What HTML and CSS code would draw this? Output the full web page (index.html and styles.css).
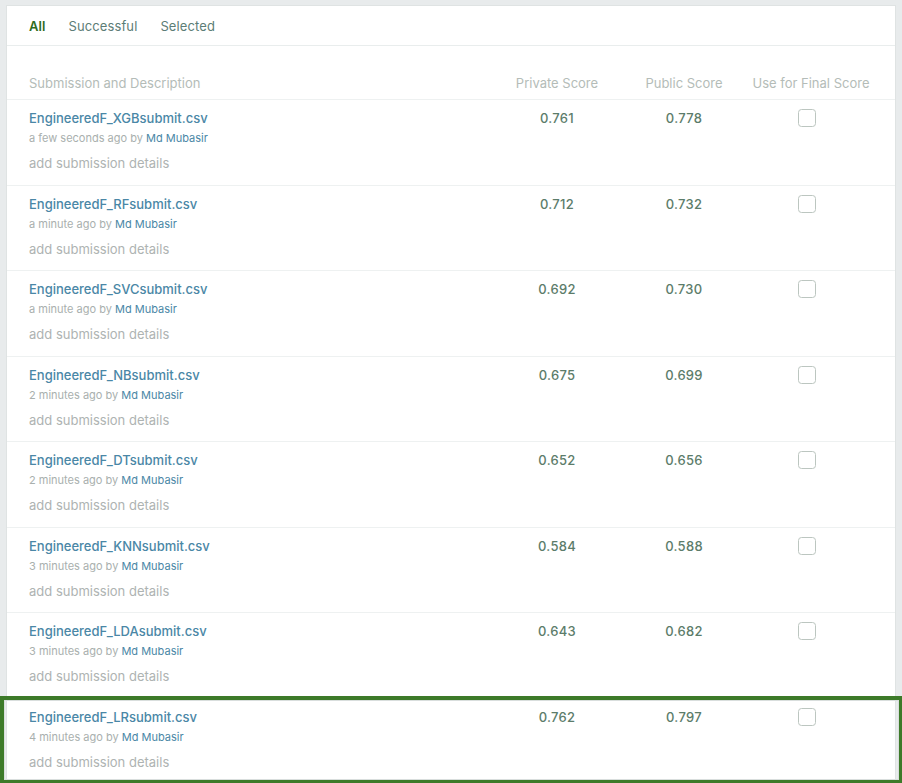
FILE: index.html
```
<!DOCTYPE html>
<html>
<head>
<meta charset="utf-8">
<link rel="stylesheet" href="styles.css">
</head>
<body>
<div class="panel">
  <nav class="tabs">
    <span class="tab active">All</span>
    <span class="tab">Successful</span>
    <span class="tab">Selected</span>
  </nav>
  <div class="table">
    <div class="row head">
      <div class="c-desc">Submission and Description</div>
      <div class="c-num">Private Score</div>
      <div class="c-num">Public Score</div>
      <div class="c-num">Use for Final Score</div>
    </div>

    <div class="row">
      <div class="c-desc"><div class="title">EngineeredF_XGBsubmit.csv</div><div class="meta">a few seconds ago by <span class="user">Md Mubasir</span></div><div class="details">add submission details</div></div>
      <div class="c-num score">0.761</div><div class="c-num score">0.778</div><div class="c-num"><span class="box"></span></div>
    </div>
    <div class="row">
      <div class="c-desc"><div class="title">EngineeredF_RFsubmit.csv</div><div class="meta">a minute ago by <span class="user">Md Mubasir</span></div><div class="details">add submission details</div></div>
      <div class="c-num score">0.712</div><div class="c-num score">0.732</div><div class="c-num"><span class="box"></span></div>
    </div>
    <div class="row">
      <div class="c-desc"><div class="title">EngineeredF_SVCsubmit.csv</div><div class="meta">a minute ago by <span class="user">Md Mubasir</span></div><div class="details">add submission details</div></div>
      <div class="c-num score">0.692</div><div class="c-num score">0.730</div><div class="c-num"><span class="box"></span></div>
    </div>
    <div class="row">
      <div class="c-desc"><div class="title">EngineeredF_NBsubmit.csv</div><div class="meta">2 minutes ago by <span class="user">Md Mubasir</span></div><div class="details">add submission details</div></div>
      <div class="c-num score">0.675</div><div class="c-num score">0.699</div><div class="c-num"><span class="box"></span></div>
    </div>
    <div class="row">
      <div class="c-desc"><div class="title">EngineeredF_DTsubmit.csv</div><div class="meta">2 minutes ago by <span class="user">Md Mubasir</span></div><div class="details">add submission details</div></div>
      <div class="c-num score">0.652</div><div class="c-num score">0.656</div><div class="c-num"><span class="box"></span></div>
    </div>
    <div class="row">
      <div class="c-desc"><div class="title">EngineeredF_KNNsubmit.csv</div><div class="meta">3 minutes ago by <span class="user">Md Mubasir</span></div><div class="details">add submission details</div></div>
      <div class="c-num score">0.584</div><div class="c-num score">0.588</div><div class="c-num"><span class="box"></span></div>
    </div>
    <div class="row">
      <div class="c-desc"><div class="title">EngineeredF_LDAsubmit.csv</div><div class="meta">3 minutes ago by <span class="user">Md Mubasir</span></div><div class="details">add submission details</div></div>
      <div class="c-num score">0.643</div><div class="c-num score">0.682</div><div class="c-num"><span class="box"></span></div>
    </div>
    <div class="row highlight">
      <div class="c-desc"><div class="title">EngineeredF_LRsubmit.csv</div><div class="meta">4 minutes ago by <span class="user">Md Mubasir</span></div><div class="details">add submission details</div></div>
      <div class="c-num score">0.762</div><div class="c-num score">0.797</div><div class="c-num"><span class="box"></span></div>
    </div>
  </div>
</div>
</body>
</html>
```
FILE: styles.css
```
html, body {
  margin: 0;
  padding: 0;
  background: #e8ebec;
  height: 783px;
  overflow: hidden;
}
body {
  font-family: Inter, "Noto Sans", sans-serif;
  padding: 5px 6px 0 6px;
  box-sizing: border-box;
}
.panel {
  background: #fff;
  border: 1px solid #dfe3e3;
  border-bottom: none;
  height: 790px;
  box-sizing: border-box;
}
.tabs {
  display: flex;
  gap: 23px;
  height: 39px;
  align-items: center;
  padding-left: 22px;
  border-bottom: 1px solid #e9eded;
  font-size: 13px;
}
.tab {
  color: #5c7d76;
  letter-spacing: 0.1px;
}
.tab.active {
  color: #2f6d1f;
  font-weight: 600;
}
.table {
  padding-top: 29px;
}
.row {
  display: grid;
  grid-template-columns: 1fr 126px 128px 126px;
  padding: 0 21px 0 22px;
  border-bottom: 1px solid #eef1f1;
  height: 85.5px;
  box-sizing: border-box;
  position: relative;
}
.row.head {
  height: 25px;
  align-items: start;
  font-size: 13px;
  line-height: 16px;
  color: #b4bcb8;
}
.c-num {
  text-align: center;
}
.row:not(.head) .c-desc,
.row:not(.head) .c-num {
  padding-top: 9px;
}
.title {
  font-size: 13px;
  font-weight: 500;
  color: #4a87a6;
  line-height: 18px;
}
.meta {
  font-size: 11px;
  color: #a9b0ae;
  line-height: 16px;
  margin-top: 3px;
}
.user {
  color: #4a87a6;
}
.details {
  font-size: 13px;
  color: #aeb3b2;
  line-height: 18px;
  margin-top: 8px;
}
.score {
  font-size: 13px;
  font-weight: 500;
  color: #5c7c6a;
  line-height: 18px;
  letter-spacing: 0.3px;
}
.box {
  display: inline-block;
  width: 16px;
  height: 16px;
  border: 1.5px solid #bcc6c0;
  border-radius: 3.5px;
  margin-right: 8px;
}
.row.highlight::after {
  content: "";
  position: absolute;
  left: -7px;
  right: -8px;
  top: -3px;
  height: 88px;
  box-sizing: border-box;
  border: 4px solid #3d7a29;
  box-shadow: inset 0 0 0 1px #d9dedd;
  pointer-events: none;
}
```
